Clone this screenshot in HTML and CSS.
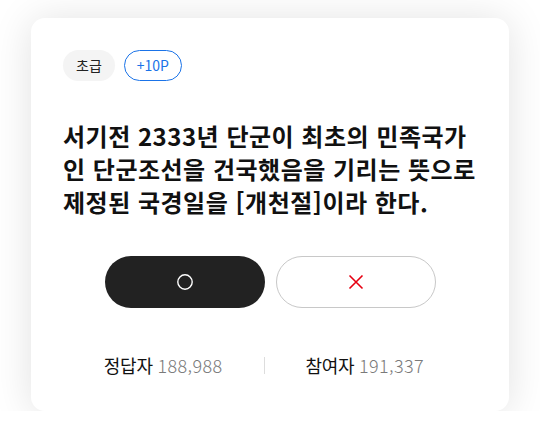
FILE: index.html
```html
<!DOCTYPE html>
<html lang="ko">
<head>
    <meta charset="UTF-8">
    <meta name="viewport" content="width=device-width, initial-scale=1.0">
    <title>OX 퀴즈</title>
    <link rel="stylesheet" href="styles.css">
</head>
<body>
    <div class="quiz-card">
        <div class="badges">
            <span class="badge level">초급</span>
            <span class="badge point">+10P</span>
        </div>
        <p class="question">서기전 2333년 단군이 최초의 민족국가인 단군조선을 건국했음을 기리는 뜻으로 제정된 국경일을 [개천절]이라 한다.</p>
        <div class="answers">
            <button class="answer-btn answer-o" aria-label="O">
                <svg width="18" height="18" viewBox="0 0 18 18"><circle cx="9" cy="9" r="7.2" fill="none" stroke="#fff" stroke-width="1.4"/></svg>
            </button>
            <button class="answer-btn answer-x" aria-label="X">
                <svg width="16" height="16" viewBox="0 0 16 16"><path d="M1.5 1.5 L14.5 14.5 M14.5 1.5 L1.5 14.5" stroke="#e60012" stroke-width="1.6" fill="none"/></svg>
            </button>
        </div>
        <div class="stats">
            <span class="stat">정답자 <em>188,988</em></span>
            <span class="divider"></span>
            <span class="stat">참여자 <em>191,337</em></span>
        </div>
    </div>
</body>
</html>
```

FILE: styles.css
```css
body {
    font-family: "Noto Sans CJK KR", "Noto Sans", sans-serif;
    background-color: #fff;
    color: #111;
    margin: 0;
    padding: 18px 31px 0;
}
.quiz-card {
    background-color: #fff;
    border-radius: 14px;
    box-shadow: 0 2px 40px rgba(0, 0, 0, 0.12);
    padding: 32px 32px 32px;
    height: 393px;
    box-sizing: border-box;
}
.badges {
    display: flex;
    gap: 9px;
}
.badge {
    height: 31px;
    line-height: 31px;
    padding: 0 13px;
    border-radius: 16px;
    font-size: 14px;
    box-sizing: border-box;
}
.badge.level {
    background-color: #f4f4f4;
    color: #222;
}
.badge.point {
    border: 1px solid #1a73e8;
    line-height: 29px;
    color: #1a73e8;
    padding: 0 12px;
}
.question {
    margin: 38px -11px 0 0;
    font-size: 24px;
    font-weight: bold;
    line-height: 33px;
    letter-spacing: 0.5px;
    color: #111;
}
.answers {
    display: flex;
    justify-content: center;
    gap: 11px;
    margin-top: 38px;
}
.answer-btn {
    width: 160px;
    height: 52px;
    border-radius: 26px;
    display: flex;
    align-items: center;
    justify-content: center;
    cursor: pointer;
    padding: 0;
}
.answer-o {
    background-color: #222;
    border: none;
}
.answer-x {
    background-color: #fff;
    border: 1px solid #c8c8c8;
}
.stats {
    display: flex;
    justify-content: center;
    align-items: center;
    gap: 41px;
    margin-top: 44px;
    font-size: 18px;
    letter-spacing: -0.3px;
    color: #111;
    padding-right: 12px;
}
.stat em {
    font-style: normal;
    color: #7a7a7a;
    font-weight: 300;
    letter-spacing: 0.4px;
}
.divider {
    width: 1px;
    height: 17px;
    background-color: #ddd;
}
```
